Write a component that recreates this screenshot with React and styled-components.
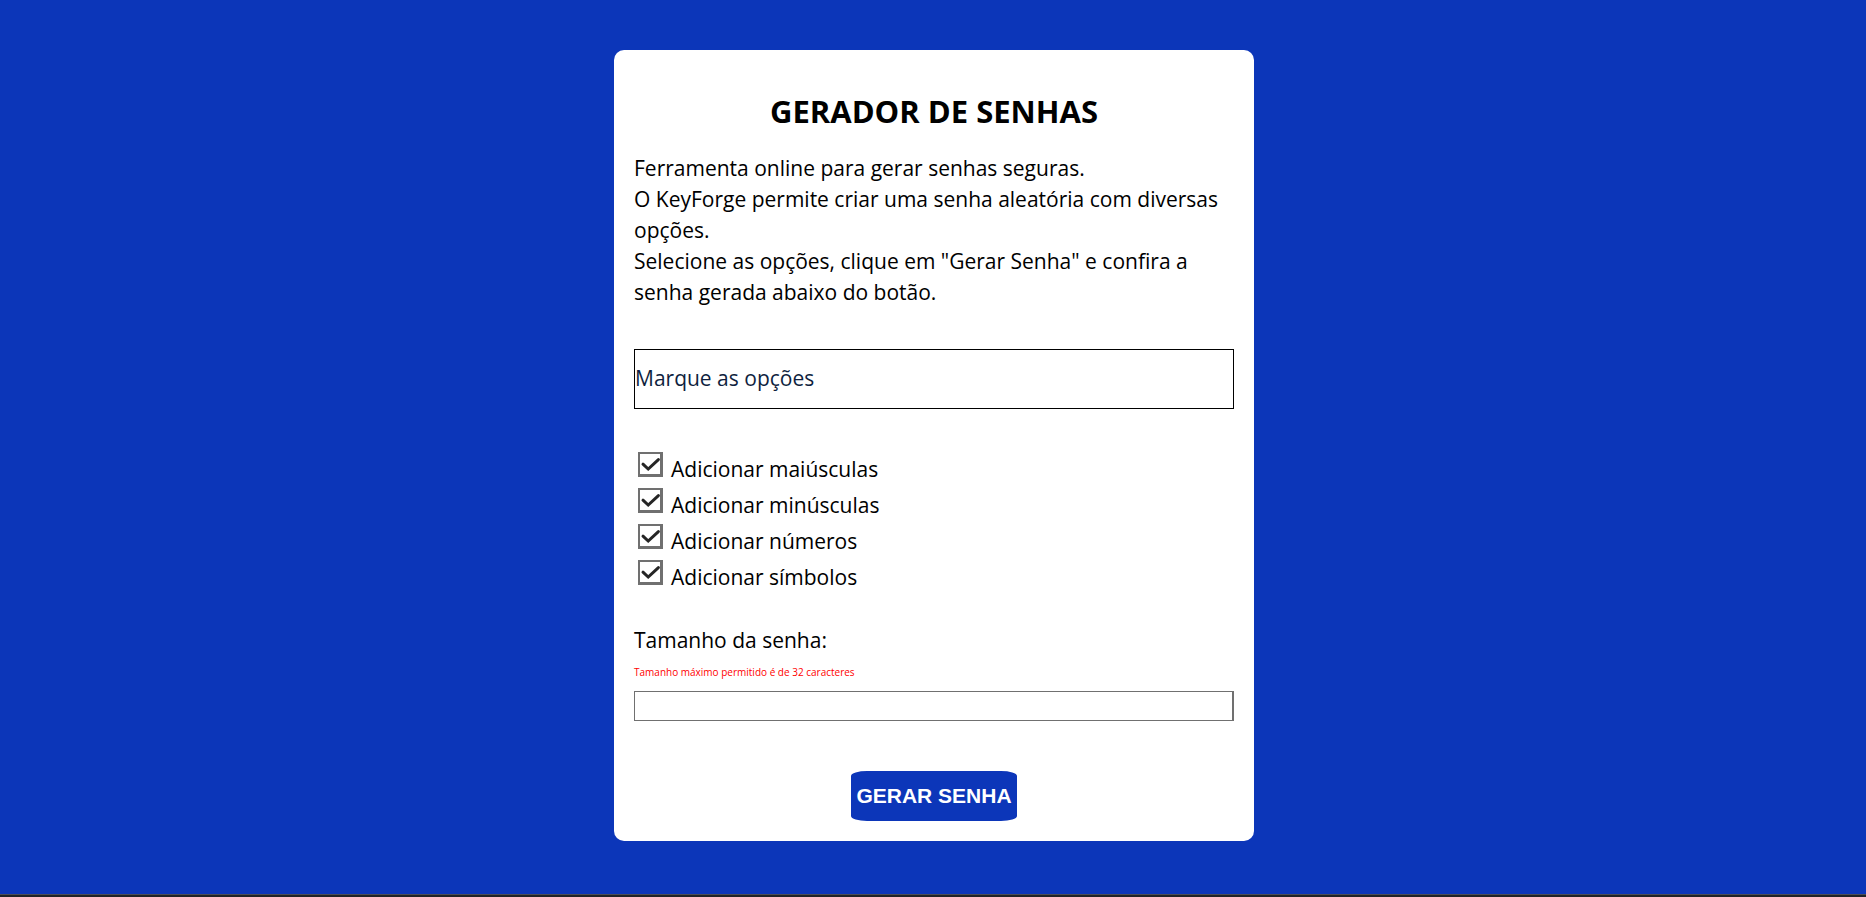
import React, { useState } from "react";
import styled, { createGlobalStyle } from "styled-components";

const blue = "#0c36b9";

const GlobalStyle = createGlobalStyle`
  *, *::before, *::after {
    box-sizing: border-box;
  }
  body {
    margin: 0;
    background: ${blue};
    color: #000;
    font-family: "Open Sans", sans-serif;
    font-size: 21px;
    line-height: 31px;
  }
`;

const Page = styled.div`
  display: flex;
  flex-direction: column;
  min-height: 100vh;
`;

const Main = styled.main`
  flex: 1;
  padding: 50px 16px 48px 18px;
`;

const Card = styled.form`
  display: flex;
  flex-direction: column;
  max-width: 640px;
  margin: 0 auto;
  padding: 40px 20px 20px;
  border-radius: 10px;
  background: #fff;
`;

const Title = styled.h1`
  margin: 0 0 21px;
  font-size: 31px;
  line-height: 42px;
  font-weight: 700;
  text-align: center;
`;

const Intro = styled.p`
  margin: 0 0 41px;
`;

const GroupTitle = styled.h2`
  margin: 0 0 40px;
  padding: 13px 0 14px;
  border: 1px solid #000;
  color: #0f1f40;
  font-size: 21px;
  line-height: 31px;
  font-weight: 400;
`;

const Options = styled.div`
  display: flex;
  flex-direction: column;
  align-items: flex-start;
  margin-bottom: 32px;
`;

const Option = styled.label`
  display: flex;
  align-items: flex-start;
  gap: 8px;
  height: 36px;
  padding-left: 4px;
`;

const Box = styled.span`
  display: grid;
  width: 25px;
  height: 25px;
  margin-top: 3px;

  > * {
    grid-area: 1 / 1;
  }
`;

const Checkbox = styled.input`
  appearance: none;
  width: 25px;
  height: 25px;
  margin: 0;
  border: 2px solid #707070;
  border-right-width: 3px;
  border-bottom-width: 3px;
  background: #fff;
`;

const Tick = styled.svg`
  width: 25px;
  height: 25px;
  pointer-events: none;
`;

const OptionText = styled.span`
  margin-top: 5px;
`;

const Hint = styled.small`
  margin: 8px 0 11px;
  color: #f00;
  font-size: 10px;
  line-height: 16px;
`;

const LengthInput = styled.input`
  width: 100%;
  height: 30px;
  margin: 0 0 50px;
  padding: 1px 2px;
  border: 1px solid #707070;
  border-right-width: 2px;
  border-radius: 0;
  background: #fff;
  font: inherit;
`;

const Button = styled.button`
  align-self: center;
  height: 50px;
  padding: 0 5px;
  border: 0;
  border-radius: 16px / 5px;
  background: ${blue};
  color: #fff;
  font-family: "Liberation Sans", Arial, sans-serif;
  font-size: 21px;
  font-weight: 700;
  cursor: pointer;
`;

const BottomEdge = styled.footer`
  height: 3px;
  border-top: 1px solid #4a4d57;
  background: #202328;
`;

const options = [
  { id: "upper", label: "Adicionar maiúsculas" },
  { id: "lower", label: "Adicionar minúsculas" },
  { id: "numbers", label: "Adicionar números" },
  { id: "symbols", label: "Adicionar símbolos" },
];

function CheckOption({ id, label, checked, onChange }) {
  return (
    <Option htmlFor={id}>
      <Box>
        <Checkbox type="checkbox" id={id} checked={checked} onChange={onChange} />
        {checked && (
          <Tick viewBox="0 0 25 25" aria-hidden="true">
            <path
              d="M5 12.2 L10.2 17 L20.4 7.6"
              fill="none"
              stroke="#252525"
              strokeWidth="3"
              strokeLinecap="round"
            />
          </Tick>
        )}
      </Box>
      <OptionText>{label}</OptionText>
    </Option>
  );
}

export default function App() {
  const [selected, setSelected] = useState({
    upper: true,
    lower: true,
    numbers: true,
    symbols: true,
  });
  const toggle = (id) => setSelected((s) => ({ ...s, [id]: !s[id] }));

  return (
    <>
      <GlobalStyle />
      <Page>
        <Main>
          <Card onSubmit={(e) => e.preventDefault()}>
            <Title>GERADOR DE SENHAS</Title>
            <Intro>
              Ferramenta online para gerar senhas seguras.
              <br />
              O KeyForge permite criar uma senha aleatória com diversas opções.
              <br />
              Selecione as opções, clique em "Gerar Senha" e confira a senha
              gerada abaixo do botão.
            </Intro>
            <GroupTitle id="options-title">Marque as opções</GroupTitle>
            <Options role="group" aria-labelledby="options-title">
              {options.map((o) => (
                <CheckOption
                  key={o.id}
                  id={o.id}
                  label={o.label}
                  checked={selected[o.id]}
                  onChange={() => toggle(o.id)}
                />
              ))}
            </Options>
            <label htmlFor="length">Tamanho da senha:</label>
            <Hint id="length-hint">Tamanho máximo permitido é de 32 caracteres</Hint>
            <LengthInput
              id="length"
              type="text"
              inputMode="numeric"
              aria-describedby="length-hint"
            />
            <Button type="submit">GERAR SENHA</Button>
          </Card>
        </Main>
        <BottomEdge />
      </Page>
    </>
  );
}
